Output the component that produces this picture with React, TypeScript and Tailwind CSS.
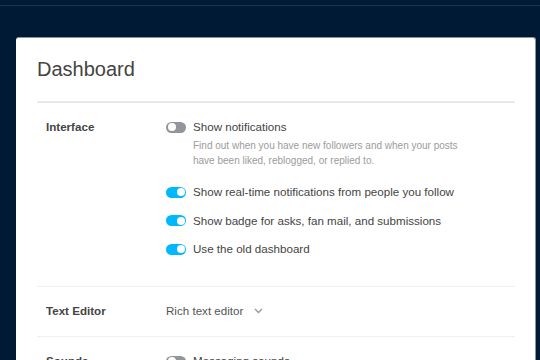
import React from "react";

const font = { fontFamily: '"Liberation Sans", Arial, sans-serif' };

const Toggle = ({ on }: { on: boolean }) => (
  <div
    className={`relative h-[11px] w-[20px] shrink-0 rounded-full ${on ? "bg-[#00b8ff]" : "bg-[#929599]"}`}
  >
    <div
      className={`absolute top-[1.5px] h-[8px] w-[8px] rounded-full bg-white ${on ? "right-[1.5px]" : "left-[1.5px]"}`}
    />
  </div>
);

const ToggleRow = ({ on, label }: { on: boolean; label: string }) => (
  <div className="flex h-[18px] items-center gap-[7px]">
    <Toggle on={on} />
    <span className="text-[11.6px] text-[#444]">{label}</span>
  </div>
);

const Section = ({
  title,
  children,
  pad,
  last,
}: {
  title: string;
  children: React.ReactNode;
  pad: string;
  last?: boolean;
}) => (
  <div className={`flex pl-[9px] ${pad} ${last ? "" : "border-b border-[#f0f0f0]"}`}>
    <div className="w-[120px] shrink-0 text-[11.6px] font-bold leading-[18px] text-[#444]">{title}</div>
    <div className="flex-1">{children}</div>
  </div>
);

export default function App() {
  return (
    <div className="h-screen overflow-hidden bg-[#001935]" style={font}>
      <div className="h-[6px] border-b border-[#1b3350]" />
      <div className="pt-[31px] pl-4">
        <div className="w-[520px] rounded-[3px] border-r border-t border-[#8794a3] bg-white pl-[21px] pr-[20px]">
          <div className="border-b-2 border-[#e8e8e8] pt-[19px] pb-[20px]">
            <h1 className="text-[20px] leading-[24px] text-[#444]">Dashboard</h1>
          </div>

          <Section title="Interface" pad="pt-[15px] pb-[28px]">
            <ToggleRow on={false} label="Show notifications" />
            <p className="mt-[3px] ml-[27px] text-[10px] leading-[14.5px] text-[#9b9b9b]">
              Find out when you have new followers and when your posts
              <br />
              have been liked, reblogged, or replied to.
            </p>
            <div className="mt-[15px] flex flex-col gap-[10.5px]">
              <ToggleRow on label="Show real-time notifications from people you follow" />
              <ToggleRow on label="Show badge for asks, fan mail, and submissions" />
              <ToggleRow on label="Use the old dashboard" />
            </div>
          </Section>

          <Section title="Text Editor" pad="pt-[15px] pb-[16px]">
            <div className="flex h-[18px] items-center gap-[11px]">
              <span className="text-[11.6px] text-[#555]">Rich text editor</span>
              <svg width="9" height="6" viewBox="0 0 9 6" fill="none">
                <path d="M1 1l3.5 3.5L8 1" stroke="#999" strokeWidth="1.4" />
              </svg>
            </div>
          </Section>

          <Section title="Sounds" pad="pt-[15px] pb-4" last>
            <ToggleRow on={false} label="Messaging sounds" />
          </Section>
        </div>
      </div>
    </div>
  );
}
